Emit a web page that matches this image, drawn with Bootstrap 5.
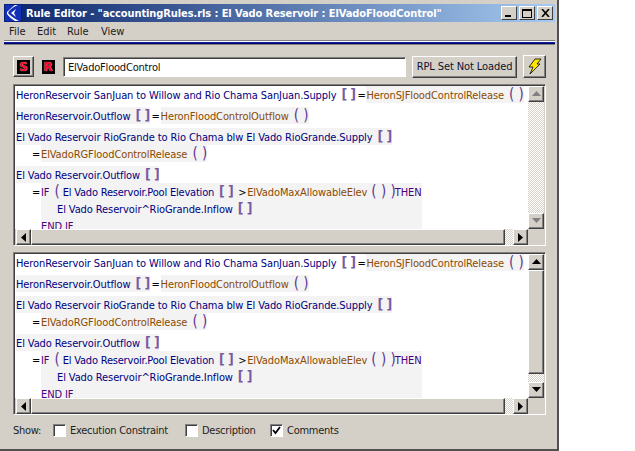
<!DOCTYPE html>
<html lang="en">
<head>
<meta charset="utf-8">
<title>Rule Editor</title>
<link href="https://cdn.jsdelivr.net/npm/bootstrap@5.3.0/dist/css/bootstrap.min.css" rel="stylesheet">
<style>
html,body{background:#fff;margin:0;height:451px;overflow:hidden}
body{font-family:"DejaVu Sans Condensed","DejaVu Sans",sans-serif;font-stretch:condensed;font-size:11px;line-height:13px;color:#000}
.win{width:559px;height:451px;background:#d4d0c8;border-right:2px solid #505050;border-bottom:2px solid #505050;padding:4px 2px 0 4px;display:flex;flex-direction:column}
.ttl{height:18px;background:linear-gradient(90deg,#0a246a,#a6caf0);color:#fff;font-weight:700;font-size:11px;letter-spacing:-.09px;padding-right:2px;flex:none;white-space:nowrap}
.ttl .logo{width:18px;height:18px;flex:none}
.capb{width:16px;height:14px;background:#d4d0c8;border:1px solid;border-color:#fff #404040 #404040 #fff;display:flex;align-items:center;justify-content:center}
.capsp{margin-left:2px}
.mbar{height:18px;flex:none;padding:1px 0 0 5px;color:#1a1a1a;white-space:nowrap}
.mbar span:nth-child(1){width:28px}.mbar span:nth-child(2){width:30px}.mbar span:nth-child(3){width:34px}
.rule{height:5px;flex:none;border-top:1px solid #808080;border-bottom:1px solid #808080;background:linear-gradient(#fff 0 1px,#0a1fa8 1px 2px,#000060 2px 3px)}
.tools{height:23px;margin-top:10px;padding-left:9px;flex:none}
.sbtn{width:21px;height:21px;background:#d4d0c8;border:1px solid;border-color:#fff #404040 #404040 #fff;box-shadow:inset -1px -1px 0 #808080;display:flex;align-items:center;justify-content:center}
.rbtn{width:22px;height:21px;margin-left:3px;display:flex;align-items:center;justify-content:center;flex:none}
.tag{width:13px;height:14px;background:#000;color:#ff0020;font:700 12px/14px "DejaVu Sans",sans-serif;text-align:center;text-shadow:0 0 1px #fff}
.fld{width:343px;height:20px;margin-left:4px;background:#fff;border:1px solid;border-color:#808080 #fff #fff #808080;box-shadow:inset 1px 1px 0 #404040;padding-left:4px;line-height:19px;flex:none;color:#111;white-space:nowrap;letter-spacing:-.2px}
.rpl{width:105px;height:22px;margin-left:6px;background:#d4d0c8;border:1px solid;border-color:#fff #404040 #404040 #fff;box-shadow:inset -1px -1px 0 #808080;text-align:center;line-height:20px;color:#0b1230;flex:none;white-space:nowrap;letter-spacing:-.1px}
.bolt{width:23px;height:23px;margin-left:6px;background:#d4d0c8;border:1px solid;border-color:#fff #404040 #404040 #fff;box-shadow:inset -1px -1px 0 #808080;display:flex;align-items:center;justify-content:center;flex:none}
.pane{margin:6px 0 0 9px;width:533px;flex:none;border:1px solid;border-color:#808080 #fff #fff #808080;box-shadow:inset 1px 1px 0 #404040;padding:1px 1px 0 1px;display:grid;grid-template-columns:513px 16px;grid-template-rows:1fr 16px;background:#d4d0c8}
.p1{height:162px}.p2{height:163px}
.txt{overflow:hidden;color:#000080;white-space:nowrap;background:#fff;letter-spacing:-.1px}
.ln{height:17px;line-height:19px;display:flex;align-items:stretch;padding-left:1px;white-space:pre}
.gap{margin-top:4px}
.ln2{padding-left:17px}
.hl{background:#f3f3f3;display:flex;white-space:pre}
.mh{margin-left:3px}
.wide{width:381px}
.blk{background:#f3f3f3;width:381px;margin-left:26px}
.blk .ln{padding-left:0}
.cnd{letter-spacing:-.2px;margin-left:3px}
.fn{color:#8b4a00}.kw{color:#4b0082}
.then{margin-left:-1px}
.br{color:#7a5aa0;font-weight:700;font-size:14px;line-height:17px;letter-spacing:-.6px;margin-left:5px}
.pa{color:#5e3a92;font-size:15px;line-height:17px;letter-spacing:0;margin-left:5px}
.pa2{margin-left:4px}
.op{color:#000;width:6px;text-align:center;flex:none;margin-left:2px}
.ln2>.op{margin-left:0}
.gt{margin-left:5px}
.vs{display:flex;flex-direction:column;background-image:repeating-conic-gradient(#d4d0c8 0 25%,#fff 0 50%);background-size:2px 2px;height:100%}
.hs{display:flex;margin-left:1px;background-image:repeating-conic-gradient(#d4d0c8 0 25%,#fff 0 50%);background-size:2px 2px}
.sb{width:16px;height:16px;flex:none;background:#d4d0c8;border:1px solid;border-color:#fff #404040 #404040 #fff;box-shadow:inset -1px -1px 0 #808080;display:flex;align-items:center;justify-content:center}
.hs .sb{width:15px}
.thumb{background:#d4d0c8;border:1px solid;border-color:#fff #404040 #404040 #fff;box-shadow:inset -1px -1px 0 #808080}
.grow1{flex:1 1 0}
.hthumb{width:474px;flex:none}
.hatchgap{height:8px;flex:none}
.show{margin:8px 0 0 9px;flex:none;height:14px;color:#222;white-space:nowrap;letter-spacing:-.25px}
.cb{width:13px;height:13px;margin-right:4px;background:#fff;border:1px solid;border-color:#808080 #fff #fff #808080;box-shadow:inset 1px 1px 0 #404040;display:flex;align-items:center;justify-content:center;flex:none}
.lbl{width:40px}.w1{width:132px}.w2{width:85px}
</style>
</head>
<body>
<div class="win">
  <div class="ttl d-flex align-items-center">
    <svg class="logo" viewBox="0 0 18 18"><rect width="18" height="18" fill="#0a1f7a"/><rect x="1" y="1" width="16" height="16" fill="#1230b8"/><path d="M14 1 C9 3 5 6 4 9 C6 12 10 14 15 17 L11 17 C8 15 5 13 3 10 L3 8 C6 5 8 3 11 1 Z" fill="#fff"/><path d="M12 5 L7 9 L12 13 L10 9 Z" fill="#fff"/></svg>
    <span class="ms-1">Rule Editor - "accountingRules.rls : El Vado Reservoir : ElVadoFloodControl"</span>
    <span class="ms-auto d-flex">
      <span class="capb"><svg width="8" height="8"><rect x="0" y="6" width="6" height="2"/></svg></span>
      <span class="capb capsp"><svg width="10" height="9"><rect x=".5" y="1" width="9" height="7.5" fill="none" stroke="#000"/><rect y="0" width="10" height="2"/></svg></span>
      <span class="capb capsp"><svg width="9" height="8"><path d="M1 0 L8 8 M8 0 L1 8" stroke="#000" stroke-width="1.6"/></svg></span>
    </span>
  </div>
  <div class="mbar d-flex align-items-center"><span>File</span><span>Edit</span><span>Rule</span><span>View</span></div>
  <div class="rule"></div>
  <div class="tools d-flex align-items-center">
    <div class="sbtn"><span class="tag">S</span></div>
    <div class="rbtn"><span class="tag">R</span></div>
    <div class="fld">ElVadoFloodControl</div>
    <div class="rpl">RPL Set Not Loaded</div>
    <div class="bolt"><svg width="15" height="17" viewBox="0 0 15 17"><path d="M8 1 L14 1 L10 6 L13 6 L3 16 L6 9 L2 9 Z" fill="#ffe600" stroke="#000" stroke-width=".8"/></svg></div>
  </div>
  <div class="pane p1">
    <div class="txt">
      <div class="ln"><span>HeronReservoir SanJuan to Willow and Rio Chama SanJuan.Supply</span><span class="br">[ ]</span><span class="op">=</span><span class="hl mh"><span class="fn">HeronSJFloodControlRelease</span><span class="pa">( )</span></span></div>
      <div class="ln gap"><span class="hl"><span>HeronReservoir.Outflow</span><span class="br">[ ]</span></span><span class="op">=</span><span class="hl mh"><span class="fn">HeronFloodControlOutflow</span><span class="pa">( )</span></span></div>
      <div class="ln gap"><span class="hl"><span>El Vado Reservoir RioGrande to Rio Chama blw El Vado RioGrande.Supply</span><span class="br">[ ]</span></span></div>
      <div class="ln ln2"><span class="op">=</span><span class="hl mh"><span class="fn">ElVadoRGFloodControlRelease</span><span class="pa">( )</span></span></div>
      <div class="ln gap"><span class="hl"><span>El Vado Reservoir.Outflow</span><span class="br">[ ]</span></span></div>
      <div class="ln ln2"><span class="op">=</span><span class="hl mh wide"><span class="kw">IF</span><span class="pa">(</span><span class="cnd">El Vado Reservoir.Pool Elevation</span><span class="br">[ ]</span><span class="op gt">&gt;</span><span class="fn mh">ElVadoMaxAllowableElev</span><span class="pa pa2">( ) )</span><span class="kw then">THEN</span></span></div>
      <div class="blk"><div class="ln"><span class="ms-3">El Vado Reservoir^RioGrande.Inflow</span><span class="br">[ ]</span></div><div class="ln"><span class="kw">END IF</span></div></div>
    </div>
    <div class="vs"><div class="sb"><svg width="9" height="6"><path d="M0 5 L4.5 0 L9 5Z" fill="#808080"/></svg></div><div class="grow1"></div><div class="sb"><svg width="9" height="6"><path d="M0 0 L4.5 5 L9 0Z" fill="#808080"/></svg></div></div>
    <div class="hs"><div class="sb"><svg width="5" height="9"><path d="M5 0 L0 4.5 L5 9Z"/></svg></div><div class="thumb hthumb"></div><div class="grow1"></div><div class="sb"><svg width="5" height="9"><path d="M0 0 L5 4.5 L0 9Z"/></svg></div></div>
    <div></div>
  </div>
  <div class="pane p2">
    <div class="txt">
      <div class="ln"><span>HeronReservoir SanJuan to Willow and Rio Chama SanJuan.Supply</span><span class="br">[ ]</span><span class="op">=</span><span class="hl mh"><span class="fn">HeronSJFloodControlRelease</span><span class="pa">( )</span></span></div>
      <div class="ln gap"><span class="hl"><span>HeronReservoir.Outflow</span><span class="br">[ ]</span></span><span class="op">=</span><span class="hl mh"><span class="fn">HeronFloodControlOutflow</span><span class="pa">( )</span></span></div>
      <div class="ln gap"><span class="hl"><span>El Vado Reservoir RioGrande to Rio Chama blw El Vado RioGrande.Supply</span><span class="br">[ ]</span></span></div>
      <div class="ln ln2"><span class="op">=</span><span class="hl mh"><span class="fn">ElVadoRGFloodControlRelease</span><span class="pa">( )</span></span></div>
      <div class="ln gap"><span class="hl"><span>El Vado Reservoir.Outflow</span><span class="br">[ ]</span></span></div>
      <div class="ln ln2"><span class="op">=</span><span class="hl mh wide"><span class="kw">IF</span><span class="pa">(</span><span class="cnd">El Vado Reservoir.Pool Elevation</span><span class="br">[ ]</span><span class="op gt">&gt;</span><span class="fn mh">ElVadoMaxAllowableElev</span><span class="pa pa2">( ) )</span><span class="kw then">THEN</span></span></div>
      <div class="blk"><div class="ln"><span class="ms-3">El Vado Reservoir^RioGrande.Inflow</span><span class="br">[ ]</span></div><div class="ln"><span class="kw">END IF</span></div></div>
    </div>
    <div class="vs"><div class="sb"><svg width="9" height="6"><path d="M0 5 L4.5 0 L9 5Z"/></svg></div><div class="thumb grow1"></div><div class="hatchgap"></div><div class="sb"><svg width="9" height="6"><path d="M0 0 L4.5 5 L9 0Z"/></svg></div></div>
    <div class="hs"><div class="sb"><svg width="5" height="9"><path d="M5 0 L0 4.5 L5 9Z"/></svg></div><div class="thumb hthumb"></div><div class="grow1"></div><div class="sb"><svg width="5" height="9"><path d="M0 0 L5 4.5 L0 9Z"/></svg></div></div>
    <div></div>
  </div>
  <div class="show d-flex align-items-center">
    <span class="lbl">Show:</span>
    <span class="d-flex align-items-center w1"><span class="cb"></span>Execution Constraint</span>
    <span class="d-flex align-items-center w2"><span class="cb"></span>Description</span>
    <span class="d-flex align-items-center"><span class="cb"><svg width="9" height="9"><path d="M1 4 L3.5 7 L8 1" fill="none" stroke="#000" stroke-width="1.8"/></svg></span>Comments</span>
  </div>
</div>
</body>
</html>
